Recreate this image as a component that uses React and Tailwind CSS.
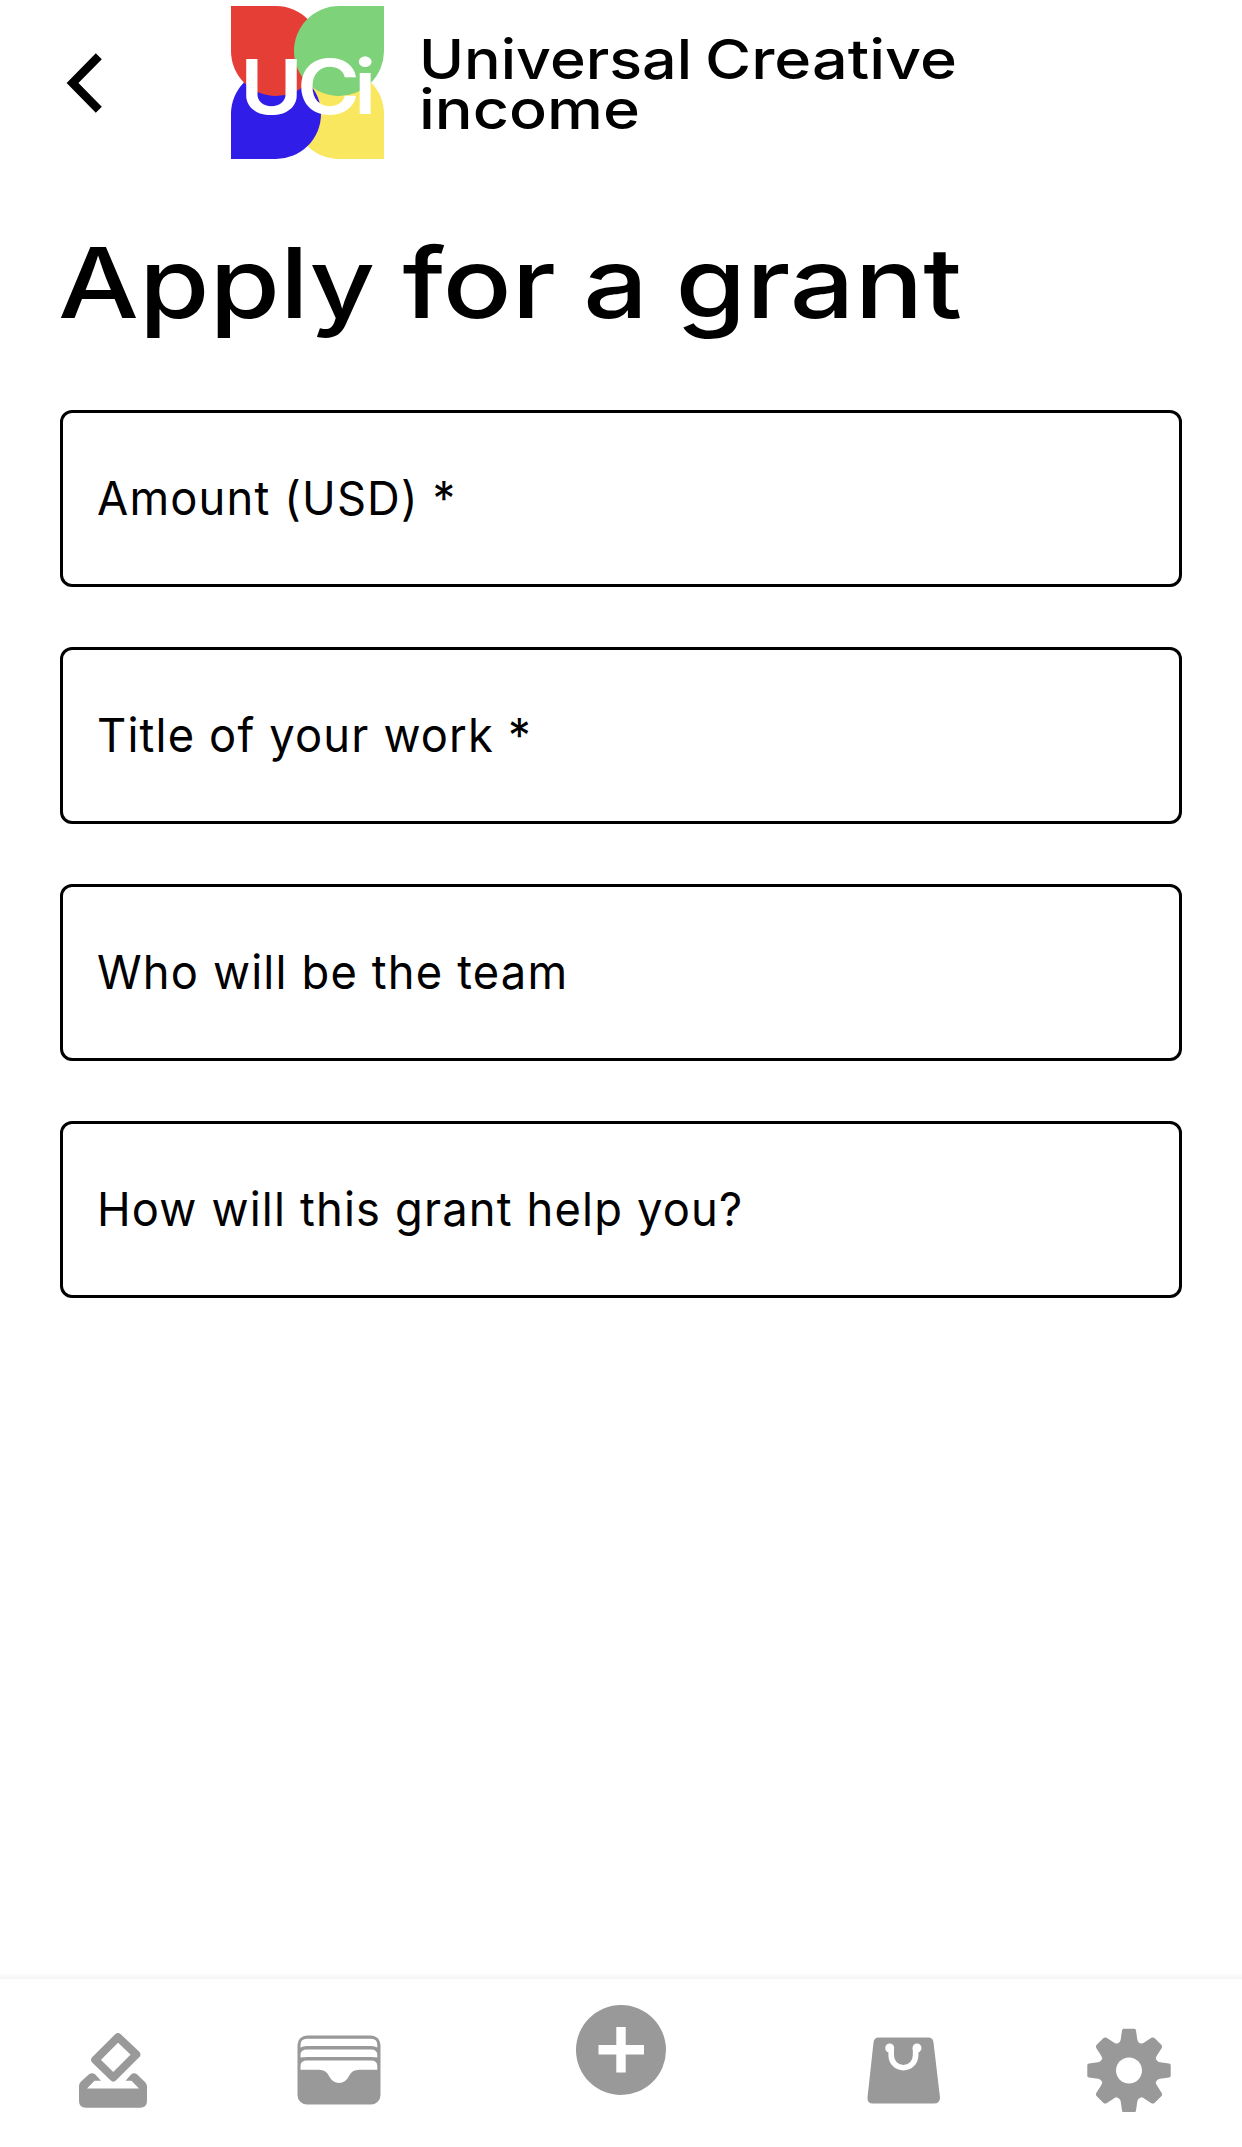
import React from "react";

const fields = [
  { name: "amount", label: "Amount (USD) *" },
  { name: "title", label: "Title of your work *" },
  { name: "team", label: "Who will be the team" },
  { name: "reason", label: "How will this grant help you?" },
];

const BackIcon = () => (
  <svg width="36" height="60" viewBox="0 0 36 60" fill="none">
    <path d="M32.800 3.200L6.500 30l26.300 26.800" stroke="#000" strokeWidth="8.400" />
  </svg>
);

const Logo = () => (
  <svg width="153" height="153" viewBox="0 0 153 153">
    <path d="M153 153H108a45 45 0 1 1 45-45z" fill="#f8e75f" />
    <path d="M0 153V108a45 45 0 1 1 45 45z" fill="#301de8" />
    <path d="M0 0H45a45 45 0 1 1-45 45z" fill="#e53e37" />
    <path d="M153 0V45a45 45 0 1 1-45-45z" fill="#7dd27a" />
    <text
      x="8"
      y="108"
      transform="scale(1.14 1)"
      fill="#fff"
      fontFamily="Inter, sans-serif"
      fontWeight="600"
      fontSize="75"
      letterSpacing="-5.300"
    >
      UCi
    </text>
  </svg>
);

const Wordmark = () => (
  <svg width="560" height="153" viewBox="0 0 560 153">
    <g fontFamily="Inter, sans-serif" fontWeight="500" fontSize="55">
      <text y="73">
        <tspan x="0" textLength="273" lengthAdjust="spacingAndGlyphs">Universal</tspan>{" "}
        <tspan x="286" textLength="252" lengthAdjust="spacingAndGlyphs">Creative</tspan>
      </text>
      <text x="0" y="123" textLength="221" lengthAdjust="spacingAndGlyphs">income</text>
    </g>
  </svg>
);

const VoteIcon = () => (
  <svg width="68" height="76" viewBox="0 0 68 76" fill="#999">
    <path d="M39 5.200L57.300 22.500L34.300 45.500L16.200 27.800z" fill="none" stroke="#999" strokeWidth="8" strokeLinejoin="round" />
    <path d="M0 54Q0 51.500 1.800 49.700L10 42.300Q13 40 16 42.300L22 48.700H15.500L8 56.500H60L52.500 48.700H46.500L52.300 42.300Q55 40 58 42.300L66.200 50.300Q68 52 68 54.500V69Q68 75.700 61 75.700H7Q0 75.700 0 69z" />
  </svg>
);

const WalletIcon = () => (
  <svg width="84" height="70" viewBox="0 0 84 70">
    <rect x=".5" y=".5" width="83" height="69" rx="9.500" fill="#999" />
    <g fill="#fff">
      <path d="M3.500 12V10Q3.500 3.800 10 3.800H74Q80.300 3.800 80.300 10V12.500Q78 11 74 11H10Q6 11 3.500 12.500z" />
      <path d="M3.500 22.500V20Q3.500 14.500 10 14.500H74Q80.300 14.500 80.300 20V22.500Q78 22 74 22H10Q6 22 3.500 22.500z" />
      <path d="M3.500 34.800V31Q3.500 25.500 10 25.500H74Q80.300 25.500 80.300 31V34.800H62Q55 34.800 52 41Q48.500 48 42 48T32 41Q29 34.800 22 34.800z" />
    </g>
  </svg>
);

const AddIcon = () => (
  <svg width="90" height="90" viewBox="0 0 90 90">
    <circle cx="45" cy="45" r="45" fill="#999" />
    <path d="M45 22V67.500M22.500 44.700H68" stroke="#fff" strokeWidth="9.400" />
  </svg>
);

const BagIcon = () => (
  <svg width="73" height="67" viewBox="0 0 73 67">
    <path d="M12 .5H61Q66 .5 66.500 5.500L73 60.500Q73 66.500 67 66.500H6Q0 66.500 .5 60.500L6.500 5.500Q7 .5 12 .5z" fill="#999" />
    <circle cx="22.700" cy="11" r="4.500" fill="#fff" />
    <circle cx="50" cy="11" r="4.500" fill="#fff" />
    <path d="M24.200 11V18.500a12.200 12.200 0 0 0 24.400 0V11" fill="none" stroke="#fff" strokeWidth="5.600" />
  </svg>
);

const teeth = [0, 45, 90, 135, 180, 225, 270, 315];

const GearIcon = () => (
  <svg width="84" height="84" viewBox="-42 -42.500 84 84">
    <g fill="#999">
      <circle r="29" />
      {teeth.map((deg) => (
        <path
          key={deg}
          d={
            deg % 90 === 0
              ? "M-13 -26.500Q-8.800 -27.500 -8.300 -31L-7 -40Q-6.700 -41.700 -5.500 -41.700H5.500Q6.700 -41.700 7 -40L8.300 -31Q8.800 -27.500 13 -26.500z"
              : "M-11 -27Q-9.200 -28.500 -9 -31L-7.300 -39Q-6.500 -41 -5 -41H5Q6.500 -41 7.300 -39L9 -31Q9.200 -28.500 11 -27z"
          }
          transform={`rotate(${deg})`}
        />
      ))}
    </g>
    <circle r="13" fill="#fff" />
  </svg>
);

const Header = () => (
  <header className="flex h-[165px] items-center pl-[66px]">
    <button type="button" aria-label="Back">
      <BackIcon />
    </button>
    <div className="ml-[129px] flex gap-[35px]">
      <Logo />
      <Wordmark />
    </div>
  </header>
);

const Field = ({ name, label }) => (
  <div
    id={name}
    className="flex h-[177px] items-center rounded-[12px] border-3 border-black px-[34px] pb-[2px]"
  >
    <span className="origin-left scale-x-[0.964] whitespace-nowrap text-[47px] leading-[60px] tracking-[1.2px]">
      {label}
    </span>
  </div>
);

const BottomNav = () => (
  <nav>
    <div className="h-[6px] bg-linear-to-b from-white to-[#f4f4f4]" />
    <div className="grid h-[168px] grid-cols-[226px_225px_340px_225px_226px] justify-items-center">
      <button type="button" aria-label="Vote" className="mt-[53px] h-[76px]">
        <VoteIcon />
      </button>
      <button type="button" aria-label="Wallet" className="mt-[56px] h-[70px]">
        <WalletIcon />
      </button>
      <button type="button" aria-label="Add" className="mt-[26px] h-[90px]">
        <AddIcon />
      </button>
      <button type="button" aria-label="Shop" className="mt-[58px] h-[67px]">
        <BagIcon />
      </button>
      <button type="button" aria-label="Settings" className="mt-[49px] h-[84px]">
        <GearIcon />
      </button>
    </div>
  </nav>
);

const App = () => {
  return (
    <div className="flex h-[2147px] w-[1242px] flex-col overflow-hidden bg-white font-['Inter',sans-serif] text-black">
      <Header />
      <main className="flex-1 px-[60px]">
        <h1 className="-ml-[2px] mt-[57px] h-[188px] w-[900px] origin-left scale-x-[1.164] whitespace-nowrap text-[98px] font-medium leading-[122px] [word-spacing:-2.5px]">
          Apply for a grant
        </h1>
        <form className="flex flex-col gap-[60px]">
          {fields.map((field) => (
            <Field key={field.name} {...field} />
          ))}
        </form>
      </main>
      <BottomNav />
    </div>
  );
};

export default App;
